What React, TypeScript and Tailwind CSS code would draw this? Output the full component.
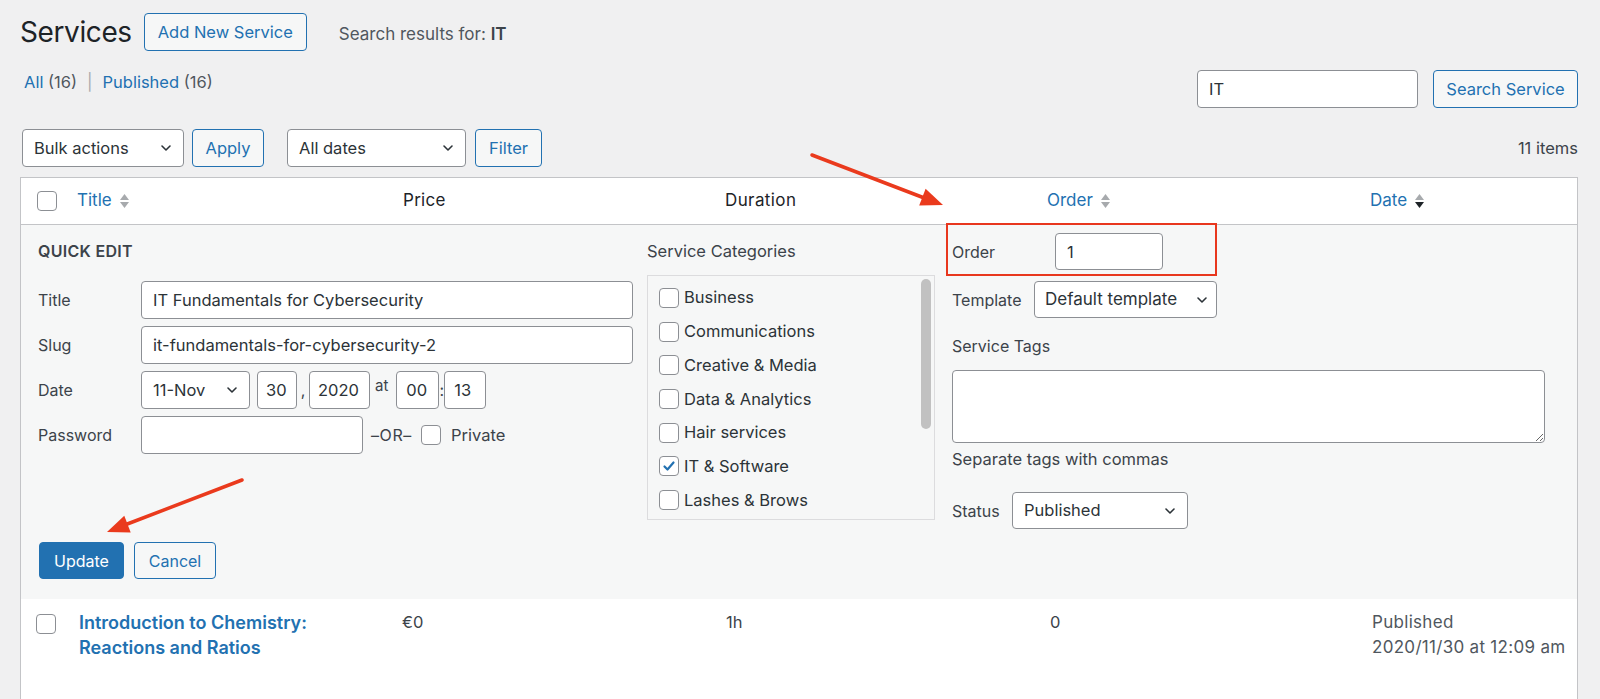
import React from 'react';

function Chevron() {
  return (
    <svg width="16" height="16" viewBox="0 0 16 16" fill="none">
      <path d="M4 6l4 4 4-4" stroke="#2c3338" strokeWidth="1.6" strokeLinecap="round" strokeLinejoin="round" />
    </svg>
  );
}

function SortIcon({ active = false }: { active?: boolean }) {
  return (
    <svg width="11" height="18" viewBox="0 0 11 18" className="ml-[7px]">
      <path d="M1 8L5.5 2L10 8Z" fill="#a7aaad" />
      <path d="M1 10L5.5 16L10 10Z" fill={active ? '#1d2327' : '#a7aaad'} />
    </svg>
  );
}

function FakeSelect({ label, className }: { label: string; className: string }) {
  return (
    <div
      className={
        'flex items-center justify-between bg-white border border-[#8c8f94] rounded-[4px] text-[#2c3338] pl-[11px] pr-[9px] ' +
        className
      }
    >
      <span>{label}</span>
      <Chevron />
    </div>
  );
}

function Checkbox({ checked = false }: { checked?: boolean }) {
  return (
    <span className="flex items-center justify-center w-[20px] h-[20px] shrink-0 bg-white border border-[#8c8f94] rounded-[4px]">
      {checked && (
        <svg width="16" height="16" viewBox="0 0 16 16" fill="none">
          <path d="M3.5 8.5l3 3 6-7" stroke="#2271b1" strokeWidth="2.2" strokeLinecap="round" strokeLinejoin="round" />
        </svg>
      )}
    </span>
  );
}

const inputCls =
  'bg-white border border-[#8c8f94] rounded-[4px] text-[#2c3338] px-[11px] outline-none';

const categories = [
  'Business',
  'Communications',
  'Creative & Media',
  'Data & Analytics',
  'Hair services',
  'IT & Software',
  'Lashes & Brows',
];

export default function App() {
  return (
    <div className="relative min-h-screen bg-[#f0f0f1] pl-[20px] pr-[22px] font-['Inter',sans-serif] text-[16px] text-[#3c434a]">
      {/* heading */}
      <div className="flex items-center h-[38px] pt-[13px] box-content">
        <h1 className="text-[28px] leading-none text-[#1d2327] tracking-[-0.4px]">Services</h1>
        <button className="ml-[12px] h-[38px] px-[13px] bg-[#f6f7f7] border border-[#2271b1] rounded-[4px] text-[#2271b1] text-[16.5px]">
          Add New Service
        </button>
        <span className="ml-[32px] mt-[5px] text-[17px] text-[#50575e]">
          Search results for: <b className="font-semibold text-[#3c434a]">IT</b>
        </span>
      </div>

      {/* views + search */}
      <div className="flex justify-between items-start mt-[19px]">
        <div className="pt-[2px] pl-[4px] leading-[20px] text-[16.5px]">
          <a className="text-[#2271b1]">All</a> <span className="text-[#50575e]">(16)</span>
          <span className="mx-[10px] text-[#a7aaad]">|</span>
          <a className="text-[#2271b1]">Published</a> <span className="text-[#50575e]">(16)</span>
        </div>
        <div className="flex items-center">
          <input readOnly value="IT" className={inputCls + ' w-[221px] h-[38px] text-[16.5px]'} />
          <button className="ml-[15px] w-[145px] h-[38px] bg-[#f6f7f7] border border-[#2271b1] rounded-[4px] text-[#2271b1] text-[16.5px]">
            Search Service
          </button>
        </div>
      </div>

      {/* tablenav */}
      <div className="flex items-center mt-[21px] h-[38px] text-[16.5px]">
        <FakeSelect label="Bulk actions" className="w-[162px] h-[38px] ml-[2px]" />
        <button className="ml-[8px] w-[72px] h-[38px] bg-[#f6f7f7] border border-[#2271b1] rounded-[4px] text-[#2271b1]">
          Apply
        </button>
        <FakeSelect label="All dates" className="w-[179px] h-[38px] ml-[23px]" />
        <button className="ml-[9px] w-[67px] h-[38px] bg-[#f6f7f7] border border-[#2271b1] rounded-[4px] text-[#2271b1]">
          Filter
        </button>
        <span className="ml-auto text-[#3c434a]">11 items</span>
      </div>

      {/* table */}
      <div className="mt-[10px] border border-[#c3c4c7] bg-white">
        {/* header */}
        <div className="flex items-center h-[47px] border-b border-[#c3c4c7] text-[17px]">
          <div className="w-[44px] pl-[16px] shrink-0">
            <Checkbox />
          </div>
          <div className="w-[326px] pl-[12px] flex items-center text-[#2271b1]">
            Title <SortIcon />
          </div>
          <div className="w-[322px] pl-[12px] text-[#1d2327] tracking-[0.3px]">Price</div>
          <div className="w-[322px] pl-[12px] text-[#1d2327] tracking-[0.4px]">Duration</div>
          <div className="w-[323px] pl-[12px] flex items-center text-[#2271b1]">
            Order <SortIcon />
          </div>
          <div className="flex-1 pl-[12px] flex items-center text-[#2271b1]">
            Date <SortIcon active />
          </div>
        </div>

        {/* quick edit */}
        <div className="bg-[#f6f7f7] pl-[17px] pb-[20px]">
          <div className="flex">
            {/* left fieldset */}
            <div className="w-[609px] shrink-0 pt-[16px]">
              <div className="leading-[20px] font-semibold text-[16px] tracking-[0.3px] text-[#3c434a]">QUICK EDIT</div>
              <div className="flex flex-col gap-[7px] mt-[20px] w-[595px]">
                <div className="flex items-center">
                  <span className="w-[103px]">Title</span>
                  <input readOnly value="IT Fundamentals for Cybersecurity" className={inputCls + ' flex-1 h-[38px] text-[16.5px]'} />
                </div>
                <div className="flex items-center">
                  <span className="w-[103px]">Slug</span>
                  <input readOnly value="it-fundamentals-for-cybersecurity-2" className={inputCls + ' flex-1 h-[38px] text-[16.5px]'} />
                </div>
                <div className="flex items-center">
                  <span className="w-[103px]">Date</span>
                  <FakeSelect label="11-Nov" className="w-[109px] h-[38px] text-[16.5px]" />
                  <input readOnly value="30" className={inputCls + ' ml-[7px] w-[40px] h-[38px] !px-[8px] text-[16.5px]'} />
                  <span className="w-[12px] text-center">,</span>
                  <input readOnly value="2020" className={inputCls + ' w-[61px] h-[38px] !px-[8px] text-[16.5px]'} />
                  <span className="ml-[5px] mb-[8px] text-[15px]">at</span>
                  <input readOnly value="00" className={inputCls + ' ml-[8px] w-[43px] h-[38px] !px-[9px] text-[16.5px]'} />
                  <span className="w-[5px] text-center">:</span>
                  <input readOnly value="13" className={inputCls + ' w-[42px] h-[38px] !px-[9px] text-[16.5px]'} />
                </div>
                <div className="flex items-center">
                  <span className="w-[103px]">Password</span>
                  <input readOnly value="" className={inputCls + ' w-[222px] h-[38px]'} />
                  <span className="ml-[8px] text-[16px] tracking-[0.6px]">–OR–</span>
                  <span className="ml-[9px]">
                    <Checkbox />
                  </span>
                  <span className="ml-[10px] text-[16.5px]">Private</span>
                </div>
              </div>
            </div>

            {/* categories */}
            <div className="w-[288px] shrink-0 pt-[16px]">
              <div className="leading-[20px] text-[16.5px]">Service Categories</div>
              <div className="relative mt-[14px] h-[245px] border border-[#dcdcde] pt-[5px] overflow-hidden">
                {categories.map((c) => (
                  <div key={c} className="flex items-center h-[33.7px] pl-[11px] text-[#2c3338] text-[16.5px]">
                    <Checkbox checked={c === 'IT & Software'} />
                    <span className="ml-[5px]">{c}</span>
                  </div>
                ))}
                <div className="absolute right-[3px] top-[3px] w-[10px] h-[150px] rounded-full bg-[#c1c1c1]" />
              </div>
            </div>

            {/* right fieldset */}
            <div className="ml-[17px] w-[593px] shrink-0 pt-[8px]">
              <div className="relative flex items-center h-[37px]">
                <span className="w-[103px]">Order</span>
                <input readOnly value="1" className={inputCls + ' w-[108px] h-[37px] text-[16.5px]'} />
                <div className="absolute left-[-6px] top-[-10px] w-[271px] h-[53px] border-2 border-[#e8371e]" />
              </div>
              <div className="flex items-center mt-[11px] h-[37px]">
                <span className="w-[82px]">Template</span>
                <FakeSelect label="Default template" className="w-[183px] h-[37px] !pl-[10px] !pr-[6px] text-[17px]" />
              </div>
              <div className="mt-[18px] leading-[20px]">Service Tags</div>
              <textarea readOnly className="block mt-[14px] w-full h-[73px] bg-white border border-[#8c8f94] rounded-[4px] outline-none" />
              <div className="mt-[6px] leading-[20px] text-[16.5px] text-[#3c434a]">Separate tags with commas</div>
              <div className="flex items-center mt-[23px] h-[37px]">
                <span className="w-[60px]">Status</span>
                <FakeSelect label="Published" className="w-[176px] h-[37px] text-[16.5px]" />
              </div>
            </div>
          </div>

          <div className="flex items-center mt-[13px] pl-[1px]">
            <button className="w-[85px] h-[37px] bg-[#2271b1] border border-[#2271b1] rounded-[4px] text-white">
              Update
            </button>
            <button className="ml-[10px] w-[82px] h-[37px] bg-[#f6f7f7] border border-[#2271b1] rounded-[4px] text-[#2271b1]">
              Cancel
            </button>
          </div>
        </div>

        {/* data row */}
        <div className="flex items-start h-[120px] pt-[11px] leading-[25px]">
          <div className="w-[44px] pl-[15px] pt-[4px] shrink-0">
            <Checkbox />
          </div>
          <div className="w-[326px] pl-[14px] font-semibold text-[18px] text-[#2271b1]">
            Introduction to Chemistry:
            <br />
            Reactions and Ratios
          </div>
          <div className="w-[322px] pl-[11px] text-[16.5px]">€0</div>
          <div className="w-[322px] pl-[13px] text-[16.5px]">1h</div>
          <div className="w-[323px] pl-[15px] text-[16.5px]">0</div>
          <div className="flex-1 pl-[14px] text-[#50575e] text-[17px] tracking-[0.3px]">
            Published
            <br />
            2020/11/30 at 12:09 am
          </div>
        </div>
      </div>

      {/* annotation arrows */}
      <svg className="absolute left-0 top-0 pointer-events-none" width="1600" height="699">
        <line x1="812" y1="155" x2="923" y2="197.5" stroke="#ea3a1d" strokeWidth="3.5" strokeLinecap="round" />
        <polygon points="943,205 919.2,205.5 925.6,188.7" fill="#ea3a1d" />
        <line x1="242" y1="480" x2="126" y2="524.5" stroke="#ea3a1d" strokeWidth="3.5" strokeLinecap="round" />
        <polygon points="107,532 124.3,515.7 130.7,532.5" fill="#ea3a1d" />
      </svg>
    </div>
  );
}
